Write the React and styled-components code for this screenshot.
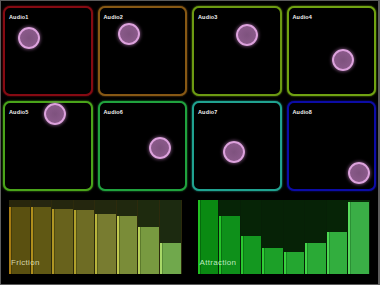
import React from "react";
import styled, { createGlobalStyle } from "styled-components";

const Global = createGlobalStyle`
  html, body { margin: 0; padding: 0; background: #000; }
  body { font-family: "Liberation Sans", Arial, sans-serif; }
`;

const Screen = styled.div`
  width: 380px;
  height: 285px;
  box-sizing: border-box;
  background: #000;
  border-style: solid;
  border-color: #5c5c5c;
  border-width: 1px 2px 1px 1px;
  display: flex;
  flex-direction: column;
`;

const PadGrid = styled.div`
  display: grid;
  grid-template-columns: repeat(4, 1fr);
  grid-template-rows: 90px 90px;
  gap: 5px;
  padding: 5px 2px 0 2px;
`;

const Pad = styled.div`
  position: relative;
  box-sizing: border-box;
  border: 2px solid ${(p) => p.$color};
  border-radius: 7px;
  background: #000;
  box-shadow: 0 0 2px ${(p) => p.$color};
`;

const PadLabel = styled.div`
  position: absolute;
  left: 4px;
  top: 7px;
  font-size: 5.5px;
  line-height: 1;
  font-weight: bold;
  letter-spacing: 0.15px;
  color: #f0f0f0;
`;

const Ball = styled.div`
  position: absolute;
  width: 22px;
  height: 22px;
  box-sizing: border-box;
  border-radius: 50%;
  border: 2px solid #dda2dd;
  background: radial-gradient(circle at 50% 50%, #7e527e 0%, #8a5a8a 70%, #a070a0 100%);
  box-shadow: 0 0 3px 1px rgba(200, 130, 200, 0.45);
  left: ${(p) => p.$x - 13}px;
  top: ${(p) => p.$y - 13}px;
`;

const ChartRow = styled.div`
  display: grid;
  grid-template-columns: 1fr 1fr;
  gap: 16px;
  padding: 9px 8px 0 8px;
`;

const Chart = styled.div`
  position: relative;
  height: 74px;
  display: flex;
  background: ${(p) => p.$track};
`;

const Column = styled.div`
  flex: 1;
  display: flex;
  flex-direction: column;
  justify-content: flex-end;
  box-sizing: border-box;
  border-right: 1px solid ${(p) => p.$line};
  background: ${(p) => p.$track};
`;

const Fill = styled.div`
  background: linear-gradient(
    to right,
    ${(p) => p.$stripe} 0 2px,
    ${(p) => p.$shade} 2px 3px,
    ${(p) => p.$body} 3px 100%
  );
`;

const ChartLabel = styled.div`
  position: absolute;
  left: 2px;
  bottom: 7px;
  font-size: 8px;
  line-height: 1;
  letter-spacing: 0.3px;
  color: ${(p) => p.$color};
`;

const pads = [
  { name: "Audio1", color: "#850a12", x: 25.7, y: 31.7 },
  { name: "Audio2", color: "#875814", x: 31.8, y: 27.7 },
  { name: "Audio3", color: "#6c9a12", x: 54.7, y: 28.7 },
  { name: "Audio4", color: "#70a212", x: 56.5, y: 54 },
  { name: "Audio5", color: "#4aa41a", x: 52, y: 13 },
  { name: "Audio6", color: "#20a23e", x: 62.2, y: 46.7 },
  { name: "Audio7", color: "#20a290", x: 42.3, y: 50.7 },
  { name: "Audio8", color: "#0c0ca6", x: 72.8, y: 72.3 },
];

const friction = [
  { v: 0.905, body: "#5a5010", stripe: "#a87c12", shade: "#463e0a", track: "#28260c" },
  { v: 0.905, body: "#605814", stripe: "#b08e1c", shade: "#4a440c", track: "#262610" },
  { v: 0.878, body: "#68621c", stripe: "#b09624", shade: "#504a10", track: "#24260e" },
  { v: 0.865, body: "#6e6c24", stripe: "#b0a02c", shade: "#565414", track: "#24260e" },
  { v: 0.811, body: "#787c30", stripe: "#b8b43c", shade: "#5c601c", track: "#22280e" },
  { v: 0.784, body: "#7a8c38", stripe: "#c0c850", shade: "#5e6e24", track: "#20280e" },
  { v: 0.635, body: "#789a40", stripe: "#b8d058", shade: "#5c7a2c", track: "#1e2a0e" },
  { v: 0.419, body: "#70a84c", stripe: "#a8d868", shade: "#588a38", track: "#1c2a10" },
];

const attraction = [
  { v: 1.0, body: "#0a8a12", stripe: "#22c022", shade: "#066a0c", track: "#082a08" },
  { v: 0.78, body: "#0e901a", stripe: "#26c42a", shade: "#087010", track: "#062406" },
  { v: 0.52, body: "#149820", stripe: "#2ac830", shade: "#0c7814", track: "#062406" },
  { v: 0.35, body: "#1ca028", stripe: "#30cc36", shade: "#12801c", track: "#062206" },
  { v: 0.3, body: "#24a630", stripe: "#38d03e", shade: "#188622", track: "#062206" },
  { v: 0.42, body: "#2aaa36", stripe: "#42d448", shade: "#1e8a28", track: "#062206" },
  { v: 0.57, body: "#32ae3e", stripe: "#4cd852", shade: "#268e30", track: "#062406" },
  { v: 0.97, body: "#3aae46", stripe: "#58dc5c", shade: "#2c9036", track: "#082a08" },
];

function BarChart({ bars, track, line, label, labelColor }) {
  return (
    <Chart $track={track}>
      {bars.map((b, i) => (
        <Column key={i} $track={b.track} $line={line}>
          <Fill
            style={{ height: `${b.v * 100}%` }}
            $body={b.body}
            $stripe={b.stripe}
            $shade={b.shade}
          />
        </Column>
      ))}
      <ChartLabel $color={labelColor}>{label}</ChartLabel>
    </Chart>
  );
}

export default function App() {
  return (
    <>
      <Global />
      <Screen>
        <PadGrid>
          {pads.map((p) => (
            <Pad key={p.name} $color={p.color}>
              <PadLabel>{p.name}</PadLabel>
              <Ball $x={p.x} $y={p.y} />
            </Pad>
          ))}
        </PadGrid>
        <ChartRow>
          <BarChart
            bars={friction}
            track="#26260c"
            line="#2c2a0c"
            label="Friction"
            labelColor="rgba(236,236,200,0.85)"
          />
          <BarChart
            bars={attraction}
            track="#072407"
            line="#062006"
            label="Attraction"
            labelColor="rgba(210,245,210,0.9)"
          />
        </ChartRow>
      </Screen>
    </>
  );
}
